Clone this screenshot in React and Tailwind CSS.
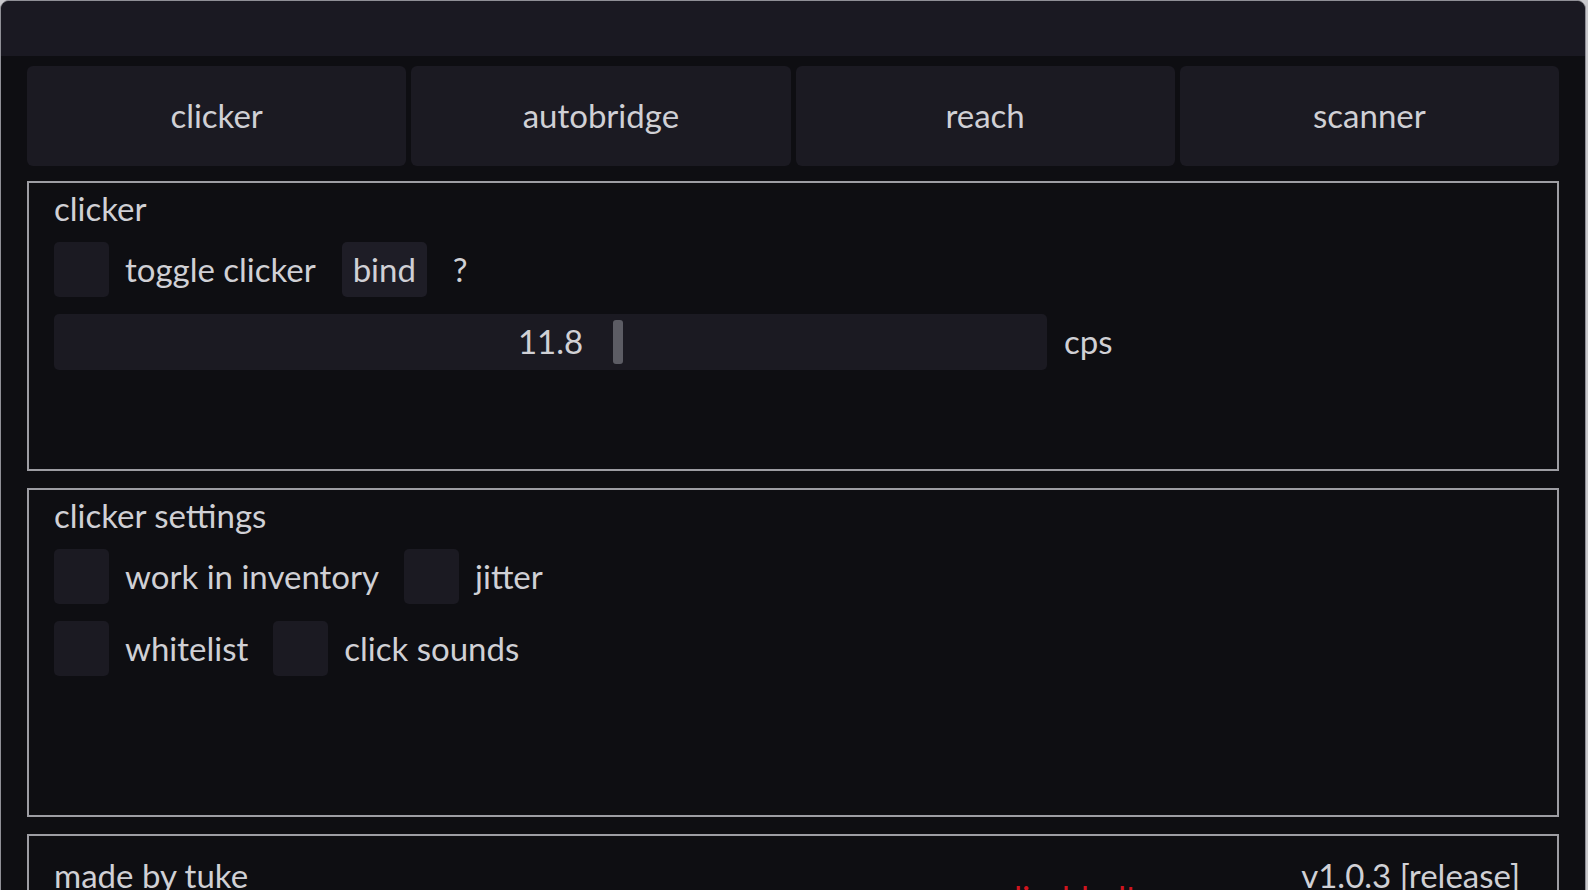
import React from "react";

const font = { fontFamily: "Lato, 'Noto Sans', sans-serif" };

//Checkbox with label
const Check = ({ label }) => (
  <div className="flex items-center gap-[16px]">
    <div className="w-[55px] h-[55px] rounded-[5px] bg-[#1b1a22]"></div>
    <span>{label}</span>
  </div>
);

//Panel wrapper
const Panel = ({ title, className, children }) => (
  <div className={"border-2 border-[#9d9da3] px-[25px] pt-[7px] " + className}>
    <div className="h-[36px] leading-[36px]">{title}</div>
    <div className="flex flex-col gap-[17px] mt-[16px]">{children}</div>
  </div>
);

const App = () => {
  const tabs = ["clicker", "autobridge", "reach", "scanner"];

  return (
    <div className="w-[1588px] h-[890px] overflow-hidden bg-[#c9c9cd]">
      <div
        className="w-[1586px] h-[910px] border border-[#8f8f96] rounded-t-[9px] bg-[#0e0e12] text-[#d0d0d5] text-[33px] overflow-hidden"
        style={font}
      >
        <div className="h-[55px] bg-[#1a1922] rounded-t-[8px]"></div>
        <div className="px-[26px] pt-[10px]">
          <div className="grid grid-cols-4 gap-[5px]">
            {tabs.map((t) => (
              <div key={t} className="h-[100px] rounded-[6px] bg-[#1b1a22] flex items-center justify-center">
                {t}
              </div>
            ))}
          </div>

          <Panel title="clicker" className="mt-[15px] h-[290px]">
            <div className="flex items-center h-[55px]">
              <Check label="toggle clicker" />
              <div className="ml-[26px] w-[85px] h-[55px] rounded-[5px] bg-[#1e1d26] flex items-center justify-center">bind</div>
              <span className="ml-[26px]">?</span>
            </div>
            <div className="flex items-center gap-[17px]">
              <div className="relative w-[993px] h-[56px] rounded-[5px] bg-[#1b1a22] flex items-center justify-center">
                <span>11.8</span>
                <div className="absolute left-[559px] top-[6px] w-[10px] h-[44px] rounded-[3px] bg-[#5c5c64]"></div>
              </div>
              <span>cps</span>
            </div>
          </Panel>

          <Panel title="clicker settings" className="mt-[17px] h-[329px]">
            <div className="flex items-center gap-[25px]">
              <Check label="work in inventory" />
              <Check label="jitter" />
            </div>
            <div className="flex items-center gap-[25px]">
              <Check label="whitelist" />
              <Check label="click sounds" />
            </div>
          </Panel>

          <div className="mt-[17px] h-[120px] border-2 border-[#9d9da3] pl-[25px] pr-[37px] pt-[21px] flex items-start">
            <span className="leading-[36px]">made by tuke</span>
            <span className="ml-[755px] mt-[24px] leading-[36px] text-[34px] text-[#d0141e]">disabled!</span>
            <span className="ml-auto leading-[36px]">v1.0.3 [release]</span>
          </div>
        </div>
      </div>
    </div>
  );
};

export default App;
